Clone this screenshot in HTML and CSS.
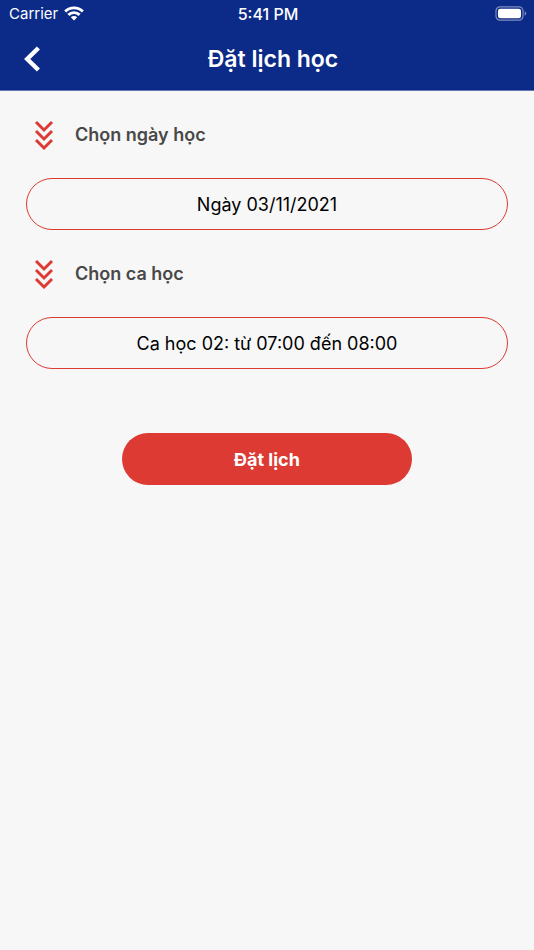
FILE: index.html
```html
<!DOCTYPE html>
<html lang="vi">
<head>
<meta charset="utf-8">
<meta name="viewport" content="width=device-width, initial-scale=1">
<title>Đặt lịch học</title>
<link rel="stylesheet" href="styles.css">
</head>
<body>
<header class="header">
  <div class="status">
    <div class="carrier">
      <span>Carrier</span>
      <svg class="wifi" width="20" height="15" viewBox="0 0 20 15" aria-hidden="true">
        <g fill="none" stroke="#fff" stroke-width="2.9">
          <path d="M1.2 5.5a12.6 12.6 0 0 1 17.6 0"/>
          <path d="M4.4 8.9a8 8 0 0 1 11.2 0"/>
        </g>
        <path fill="#fff" d="M10 14.4 6.8 11.2a4.6 4.6 0 0 1 6.4 0z"/>
      </svg>
    </div>
    <span class="time">5:41 PM</span>
    <svg class="battery" width="32" height="15" viewBox="0 0 32 15" aria-hidden="true">
      <rect x="1" y=".8" width="27" height="13.4" rx="4" fill="none" stroke="#7f8dc0" stroke-width="1.2"/>
      <rect x="3" y="2.8" width="23" height="9.4" rx="2.2" fill="#fff"/>
      <path d="M29.6 5.2q1.7.8 1.7 2.3t-1.7 2.3z" fill="#7f8dc0"/>
    </svg>
  </div>
  <nav class="nav">
    <button class="back" type="button" aria-label="Quay lại">
      <svg width="18" height="26" viewBox="0 0 18 26" aria-hidden="true">
        <path d="M14.4 2 3.2 13l11.2 11" fill="none" stroke="#fff" stroke-width="4.4"/>
      </svg>
    </button>
    <h1 class="title">Đặt lịch học</h1>
  </nav>
</header>
<main class="form">
  <div class="label-row">
    <svg class="chevrons" width="20" height="30" viewBox="0 0 20 30" aria-hidden="true">
      <path d="M2 2l8 8 8-8M2 11l8 8 8-8M2 20l8 8 8-8"/>
    </svg>
    <h2 class="label" id="date-label">Chọn ngày học</h2>
  </div>
  <button class="field" type="button" aria-describedby="date-label">Ngày 03/11/2021</button>
  <div class="label-row">
    <svg class="chevrons" width="20" height="30" viewBox="0 0 20 30" aria-hidden="true">
      <path d="M2 2l8 8 8-8M2 11l8 8 8-8M2 20l8 8 8-8"/>
    </svg>
    <h2 class="label" id="slot-label">Chọn ca học</h2>
  </div>
  <button class="field" type="button" aria-describedby="slot-label">Ca học 02: từ 07:00 đến 08:00</button>
  <button class="submit" type="submit">Đặt lịch</button>
</main>
</body>
</html>
```
FILE: styles.css
```css
* {
  box-sizing: border-box;
}

body {
  margin: 0;
  min-height: 100vh;
  background: #f7f7f7;
  color: #000;
  font-family: Inter, "Liberation Sans", sans-serif;
}

button {
  font: inherit;
  cursor: pointer;
}

.header {
  background: #0c2a87;
  border-bottom: 1px solid #6675ae;
  color: #fff;
}

.status {
  display: grid;
  grid-template-columns: 1fr auto 1fr;
  align-items: center;
  height: 27px;
  padding: 0 7px 0 9px;
  font-size: 15px;
}

.carrier {
  display: flex;
  align-items: center;
  gap: 6px;
}

.time {
  font-size: 16px;
  font-weight: 500;
}

.battery {
  justify-self: end;
}

.nav {
  display: grid;
  grid-template-columns: 48px 1fr 36px;
  align-items: center;
  height: 63px;
}

.back {
  display: flex;
  padding: 0 0 0 24px;
  border: 0;
  background: none;
}

.title {
  margin: 0;
  text-align: center;
  font-size: 23px;
  font-weight: 600;
}

.form {
  display: flex;
  flex-direction: column;
  padding: 0 26px;
}

.label-row {
  display: flex;
  align-items: center;
  gap: 21px;
  height: 87px;
  padding-left: 8px;
}

.chevrons path {
  fill: none;
  stroke: #dc3a32;
  stroke-width: 2.9;
}

.label {
  margin: 0;
  color: #484848;
  font-size: 18px;
  font-weight: 600;
}

.field {
  height: 52px;
  padding: 0 24px;
  border: 1px solid #dc3a32;
  border-radius: 26px;
  background: transparent;
  color: #000;
  font-size: 18px;
}

.submit {
  align-self: center;
  width: 60%;
  height: 52px;
  margin-top: 64px;
  border: 0;
  border-radius: 26px;
  background: #dc3a32;
  color: #fff;
  font-size: 18px;
  font-weight: 700;
}
```
